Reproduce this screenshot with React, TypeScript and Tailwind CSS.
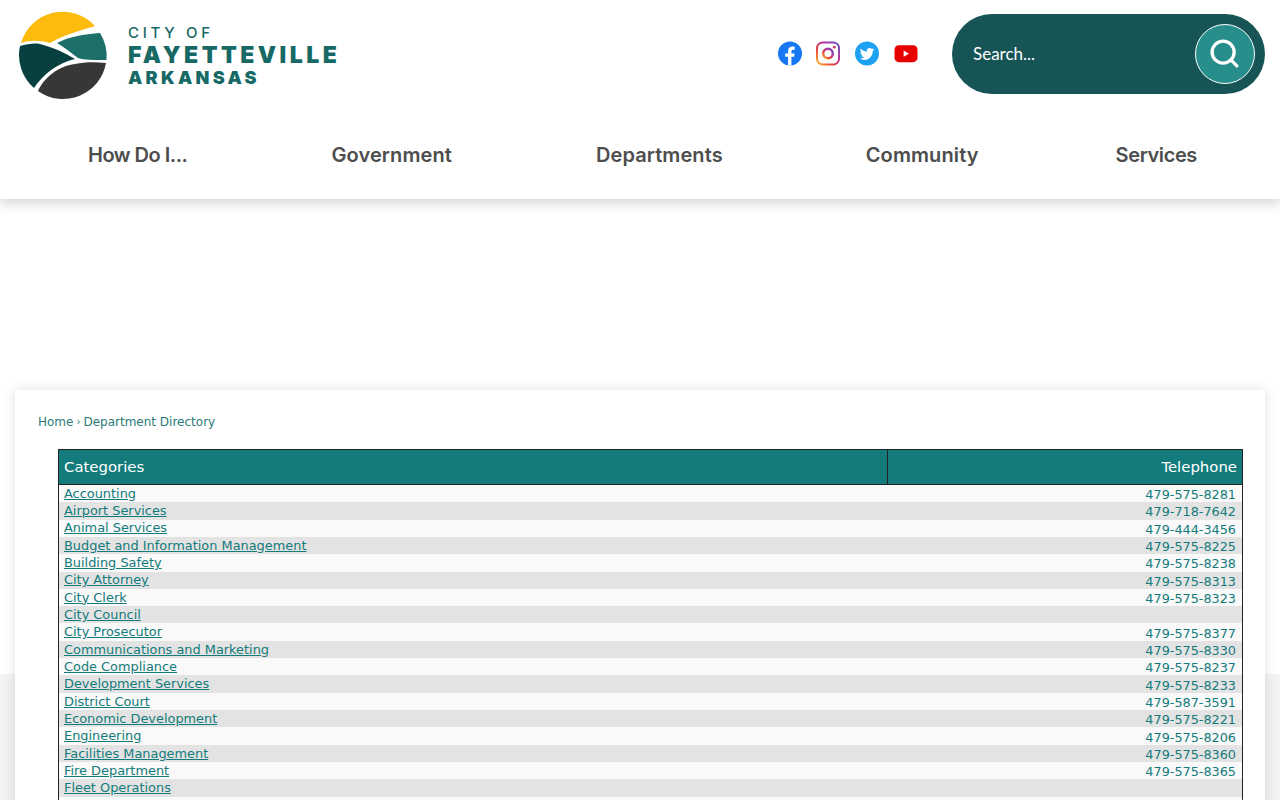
import React from 'react';
import { Search } from 'lucide-react';

const rows: [string, string][] = [
  ['Accounting', '479-575-8281'],
  ['Airport Services', '479-718-7642'],
  ['Animal Services', '479-444-3456'],
  ['Budget and Information Management', '479-575-8225'],
  ['Building Safety', '479-575-8238'],
  ['City Attorney', '479-575-8313'],
  ['City Clerk', '479-575-8323'],
  ['City Council', ''],
  ['City Prosecutor', '479-575-8377'],
  ['Communications and Marketing', '479-575-8330'],
  ['Code Compliance', '479-575-8237'],
  ['Development Services', '479-575-8233'],
  ['District Court', '479-587-3591'],
  ['Economic Development', '479-575-8221'],
  ['Engineering', '479-575-8206'],
  ['Facilities Management', '479-575-8360'],
  ['Fire Department', '479-575-8365'],
  ['Fleet Operations', ''],
  ['Geographic Information Systems', ''],
];

const navItems = [
  { label: 'How Do I...', className: 'tracking-[-0.5px]' },
  { label: 'Government', className: 'ml-[144px] tracking-[0.1px]' },
  { label: 'Departments', className: 'ml-[144px] tracking-[0.1px]' },
  { label: 'Community', className: 'ml-[143px] tracking-[0.1px]' },
  { label: 'Services', className: 'ml-[137px] tracking-[-0.4px]' },
];

const Logo = () => (
  <svg width="90" height="90" viewBox="18 11 90 90">
    <path d="M21 43A43.500 43.500 0 0 1 95 26C78 31 62 36 50 43C40 40 30 40 21 43Z" fill="#fdbb0e" />
    <path d="M57 43C68 37 84 34 100 33A43.500 43.500 0 0 1 106.500 60C94 60 84 60 78 58C70 52 64 47 57 43Z" fill="#1c7069" />
    <path d="M20 46C27 44 34 43 40 44C52 47 64 52 75 59C58 63 43 74 34 88A43.500 43.500 0 0 1 20 46Z" fill="#07403f" />
    <path d="M38 91C44 78 58 66 75 64C85 62 95 62 106 63A43.500 43.500 0 0 1 38 91Z" fill="#373737" />
  </svg>
);

const Socials = () => (
  <div className="flex items-center gap-[14.67px]">
    <svg width="24" height="25" viewBox="0 0 25 25">
      <circle cx="12.5" cy="12.5" r="12.5" fill="#1877f2" />
      <path d="M10.500 25V16H7.500V12.500H10.500V10C10.500 7 12.300 5.300 15 5.300C16.300 5.300 17.400 5.500 17.400 5.500V8.500H15.900C14.500 8.500 14 9.400 14 10.300V12.500H17.300L16.800 16H14V25Z" fill="#fff" />
    </svg>
    <svg width="24" height="25" viewBox="0 0 25 25" fill="none">
      <defs>
        <linearGradient id="ig" x1="0" y1="1" x2="1" y2="0">
          <stop offset="0" stopColor="#fdb52a" />
          <stop offset="0.35" stopColor="#e8403f" />
          <stop offset="0.65" stopColor="#b92f9a" />
          <stop offset="1" stopColor="#5a56c8" />
        </linearGradient>
      </defs>
      <rect x="1" y="1" width="23" height="23" rx="6" stroke="url(#ig)" strokeWidth="2" />
      <circle cx="12.5" cy="12.5" r="5" stroke="url(#ig)" strokeWidth="2.500" />
      <circle cx="19" cy="6" r="1.500" fill="url(#ig)" />
    </svg>
    <svg width="24" height="25" viewBox="0 0 25 25">
      <circle cx="12.5" cy="12.5" r="12.5" fill="#1da1f2" />
      <path d="M20 8.200c-.6.3-1.200.4-1.800.5.6-.4 1.100-1 1.400-1.700-.6.4-1.300.6-2 .8a3.100 3.100 0 0 0-5.300 2.800C9.800 10.500 7.500 9.300 6 7.400c-.8 1.400-.4 3.200 1 4.100-.5 0-1-.1-1.400-.4 0 1.500 1.100 2.800 2.500 3.100-.5.100-1 .1-1.400.1.400 1.200 1.500 2.100 2.900 2.100A6.300 6.300 0 0 1 5 17.700a8.800 8.800 0 0 0 13.500-7.800c.6-.4 1.100-1 1.500-1.700Z" fill="#fff" />
    </svg>
    <svg width="24" height="25" viewBox="0 0 25 25">
      <rect x="0.500" y="4" width="24" height="17.500" rx="4.500" fill="#e60000" />
      <path d="M10 9.500V16L15.500 12.750Z" fill="#fff" />
    </svg>
  </div>
);

export default function App() {
  return (
    <div className="h-screen overflow-hidden bg-[linear-gradient(#fff_674px,#f3f3f3_674px)] font-['DejaVu_Sans',sans-serif]">
      <header className="h-[199px] bg-white shadow-[0_4px_12px_rgba(0,0,0,0.18)]">
        <div className="flex h-[107px] items-center pl-[18px] pr-[15px]">
          <div className="mt-[5px] flex flex-1 items-center gap-[20px]">
            <Logo />
            <div className="flex flex-col font-['Inter',sans-serif] text-[#166965]">
              <span className="text-[15px] leading-[20px] font-medium tracking-[3.7px]">CITY OF</span>
              <span className="text-[23px] leading-[24px] font-black tracking-[3.5px]">FAYETTEVILLE</span>
              <span className="text-[18px] leading-[22px] font-black tracking-[3.3px]">ARKANSAS</span>
            </div>
          </div>
          <Socials />
          <div className="ml-[34.5px] flex h-[80px] w-[313px] items-center justify-between rounded-[40px] bg-[#165456] pr-[10px] pl-[21px]">
            <span className="font-['Lato',sans-serif] text-[17px] text-white">Search...</span>
            <span className="flex h-[60px] w-[60px] items-center justify-center rounded-full border border-white bg-[#278e8c]">
              <Search size={33} color="#fff" strokeWidth={2.4} className="mr-[2px] mb-[1px]" />
            </span>
          </div>
        </div>
        <nav className="flex h-[92px] items-center pl-[88px] pt-[3px] font-['Inter',sans-serif] text-[20px] font-semibold whitespace-nowrap text-[#4d4d4d]">
          {navItems.map((n) => (
            <span key={n.label} className={n.className}>{n.label}</span>
          ))}
        </nav>
      </header>

      <main className="mx-[15px] mt-[191px] bg-white pt-[24px] pr-[22px] pl-[23px] shadow-[0_0_12px_rgba(0,0,0,0.12)]">
        <div className="flex items-center gap-[3px] text-[12px] leading-[16px] text-[#2b7a78]">
          <span>Home</span>
          <span className="text-[10px]">›</span>
          <span>Department Directory</span>
        </div>
        <table className="mt-[19px] ml-[20px] w-[1185px] table-fixed border-collapse border border-[#222] text-[12.9px] text-[#137b7b]">
          <thead>
            <tr className="h-[35px] border-b border-[#222] bg-[#137b7b] text-[14.9px] font-normal text-white">
              <th className="w-[829px] border-r border-[#222] px-[5px] pt-[1px] text-left font-normal">Categories</th>
              <th className="px-[5px] pt-[1px] text-right font-normal">Telephone</th>
            </tr>
          </thead>
          <tbody>
            {rows.map(([name, phone], i) => (
              <tr key={name} className={i % 2 ? 'h-[17.33px] bg-[#e3e3e3]' : 'h-[17.33px] bg-[#f9f9f9]'}>
                <td className="px-[5px] pt-[0.9px] pb-0 align-top leading-[16px]">
                  <a href="#" className="underline">{name}</a>
                </td>
                <td className="pt-[3.2px] pr-[6px] pb-0 text-right align-top text-[12.8px] leading-[14px]">{phone}</td>
              </tr>
            ))}
          </tbody>
        </table>
      </main>
    </div>
  );
}
